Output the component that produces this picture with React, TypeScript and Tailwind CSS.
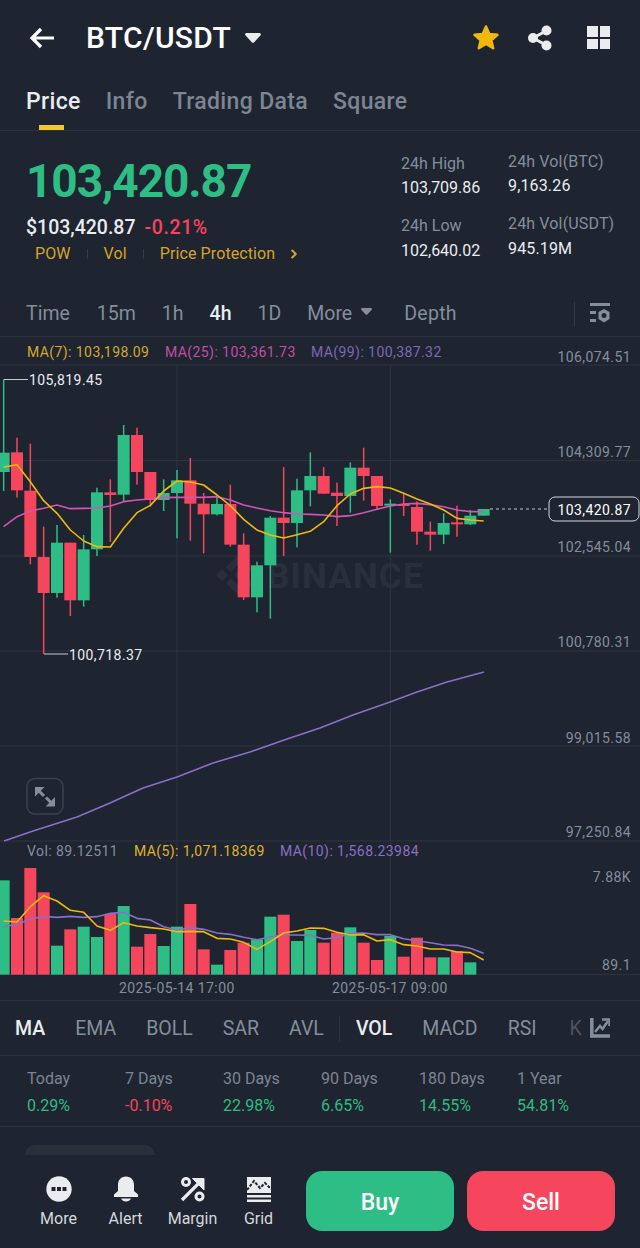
import React from "react";
import { ChevronRight } from "lucide-react";

const G = "#2ebd85";
const R = "#f6465d";
const cx = (v: number) => v / 3;
const cy = (v: number) => 340 + v / 3;

// [zoom x, wick top, wick bottom, body top, body bottom, green?]
const candles: [number, number, number, number, number, number][] = [
  [11, 118, 453, 338, 396, 1],
  [51, 293, 473, 337, 451, 0],
  [91, 311, 673, 452, 651, 0],
  [131, 560, 942, 651, 759, 0],
  [171, 555, 773, 608, 759, 1],
  [211, 608, 828, 608, 781, 0],
  [251, 585, 800, 628, 781, 1],
  [291, 443, 648, 457, 628, 1],
  [331, 418, 606, 457, 465, 0],
  [371, 255, 485, 285, 464, 1],
  [411, 263, 434, 285, 396, 0],
  [451, 396, 500, 396, 480, 0],
  [491, 418, 513, 459, 480, 1],
  [531, 390, 595, 421, 459, 1],
  [571, 354, 602, 421, 491, 0],
  [611, 459, 640, 491, 523, 0],
  [651, 470, 526, 492, 523, 1],
  [691, 434, 620, 492, 614, 0],
  [731, 580, 780, 614, 772, 0],
  [771, 665, 817, 676, 772, 1],
  [811, 528, 836, 533, 676, 1],
  [851, 381, 648, 533, 549, 0],
  [891, 416, 622, 451, 549, 1],
  [931, 337, 499, 408, 451, 1],
  [971, 381, 461, 408, 461, 0],
  [1011, 428, 558, 458, 468, 0],
  [1051, 367, 518, 383, 468, 1],
  [1091, 323, 482, 383, 408, 0],
  [1131, 408, 510, 408, 498, 0],
  [1171, 478, 638, 491, 497, 1],
  [1211, 462, 528, 492, 498, 0],
  [1251, 484, 614, 501, 575, 0],
  [1291, 545, 632, 575, 584, 0],
  [1331, 520, 612, 549, 584, 1],
  [1371, 497, 590, 547, 553, 0],
  [1411, 510, 555, 527, 553, 1],
  [1451, 507, 527, 507, 527, 1],
];

const ma7 = [381, 374, 425, 482, 520, 570, 603, 620, 621, 565, 518, 496, 453, 423, 426, 435, 465, 497, 538, 570, 585, 594, 584, 574, 545, 497, 462, 445, 440, 444, 460, 477, 492, 510, 535, 540, 543];
const ma25 = [560, 530, 513, 505, 495, 506, 505, 504, 498, 485, 480, 477, 473, 472, 472, 472, 470, 480, 495, 504, 512, 518, 522, 523, 525, 530, 527, 518, 508, 498, 492, 490, 494, 500, 510, 515, 515];
const ma99: [number, number][] = [[4, 841], [33, 831], [77, 817], [110, 803], [143, 788], [177, 777], [213, 763], [250, 752], [287, 739], [320, 728], [353, 715], [390, 702], [417, 692], [447, 682], [484, 672]];

const volTops = [121, 234, 84, 157, 317, 268, 260, 291, 222, 198, 320, 282, 318, 260, 192, 328, 374, 330, 308, 298, 230, 224, 303, 270, 308, 278, 262, 308, 360, 288, 350, 293, 352, 352, 333, 367];
const volMa5 = [243, 246, 200, 167, 183, 211, 217, 258, 271, 248, 258, 263, 267, 275, 274, 275, 295, 297, 307, 328, 305, 279, 273, 264, 265, 277, 285, 284, 303, 299, 314, 318, 327, 327, 336, 338, 360];
const volMa10 = [260, 253, 238, 229, 232, 229, 232, 230, 220, 217, 235, 240, 260, 270, 263, 268, 279, 283, 292, 299, 291, 285, 285, 286, 297, 293, 280, 279, 284, 284, 296, 302, 308, 315, 316, 325, 340];

const xi = (i: number) => 3.67 + i * 13.333;
const pts = (a: number[], base: number) => a.map((v, i) => `${xi(i)},${base + v / 3}`).join(" ");

const axis: [string, number][] = [
  ["106,074.51", 357],
  ["104,309.77", 452],
  ["102,545.04", 547],
  ["100,780.31", 642],
  ["99,015.58", 738],
  ["97,250.84", 832],
  ["7.88K", 877],
  ["89.1", 965],
];

function Chart() {
  const grid = [365, 460.5, 556, 651, 746, 841, 974.5];
  return (
    <svg width="640" height="663" viewBox="0 337 640 663" className="block">
      {grid.map((y) => (
        <line key={y} x1="0" x2="640" y1={y} y2={y} stroke="#2c333e" strokeWidth="1" />
      ))}
      <line x1="177" x2="177" y1="365" y2="975" stroke="#2c333e" />
      <line x1="390.5" x2="390.5" y1="365" y2="975" stroke="#2c333e" />

      <g fill="#2a303b">
        <path d="M240 553L254 567L249 572L240 563L231 572L226 567ZM240 597L254 583L249 578L240 587L231 578L226 583ZM240 569L246 575L240 581L234 575ZM222 569L228 575L222 581L216 575ZM258 569L264 575L258 581L252 575Z" />
        <text x="267" y="588" fontSize="35" fontWeight="700" letterSpacing="1.2">BINANCE</text>
      </g>

      {candles.map(([x, wt, wb, bt, bb, g], i) => {
        const c = g ? G : R;
        return (
          <g key={i}>
            <rect x={cx(x) - 0.75} y={cy(wt)} width="1.5" height={(wb - wt) / 3} fill={c} />
            <rect x={cx(x) - 6} y={cy(bt)} width="12" height={Math.max((bb - bt) / 3, 2)} fill={c} />
          </g>
        );
      })}

      <polyline points={pts(ma25, 340)} fill="none" stroke="#d255b4" strokeWidth="1.6" strokeLinejoin="round" />
      <polyline points={pts(ma7, 340)} fill="none" stroke="#f0b90b" strokeWidth="1.6" strokeLinejoin="round" />
      <polyline points={ma99.map((p) => p.join(",")).join(" ")} fill="none" stroke="#8a6fc9" strokeWidth="1.6" strokeLinejoin="round" />

      <g fontSize="14" dominantBaseline="central" letterSpacing="0.42">
        <text x="27" y="351.5" fill="#d6a92a">MA(7): 103,198.09</text>
        <text x="165" y="351.5" fill="#c34fa4">MA(25): 103,361.73</text>
        <text x="311" y="351.5" fill="#7f68b5">MA(99): 100,387.32</text>
        <text x="27" y="851" fill="#848e9c">Vol: 89.12511</text>
        <text x="134" y="851" fill="#e0b32a">MA(5): 1,071.18369</text>
        <text x="280" y="851" fill="#8a6fc9">MA(10): 1,568.23984</text>
        {axis.map(([t, y]) => (
          <text key={t} x="631" y={y} textAnchor="end" fill="#848e9c">{t}</text>
        ))}
        <text x="119" y="987.5" fill="#848e9c">2025-05-14 17:00</text>
        <text x="332" y="987.5" fill="#848e9c">2025-05-17 09:00</text>
        <text x="29" y="380" fill="#eaecef">105,819.45</text>
        <text x="69" y="655" fill="#eaecef">100,718.37</text>
      </g>
      <path d="M4 379.5H28" stroke="#c5cad1" strokeWidth="1" />
      <path d="M44 654H68" stroke="#c5cad1" strokeWidth="1" />

      <line x1="490" x2="548" y1="509" y2="509" stroke="#c5cad1" strokeDasharray="3 3" />
      <rect x="549" y="497" width="90" height="24" rx="6" fill="#1e2430" stroke="#d5d8dc" />
      <text x="631" y="509.5" textAnchor="end" fontSize="14" letterSpacing="0.42" fill="#ffffff" dominantBaseline="central">103,420.87</text>

      <rect x="27" y="778.5" width="36" height="35.5" rx="8" fill="none" stroke="#3a414c" strokeWidth="1.5" />
      <path d="M35 787h9.500l-9.500 9.500zM55 806.500h-9.500l9.500-9.500z" fill="#848e9c" />
      <path d="M38 790l6 6M52 803.500l-6-6" stroke="#848e9c" strokeWidth="3" />

      {volTops.map((t, i) => (
        <rect key={i} x={xi(i) - 6} y={840 + t / 3} width="12" height={(404 - t) / 3} fill={candles[i][5] ? G : R} />
      ))}
      <polyline points={pts(volMa10, 840)} fill="none" stroke="#8a6fc9" strokeWidth="1.6" strokeLinejoin="round" />
      <polyline points={pts(volMa5, 840)} fill="none" stroke="#f0b90b" strokeWidth="1.6" strokeLinejoin="round" />
    </svg>
  );
}

const Caret = ({ className }: { className: string }) => (
  <svg viewBox="0 0 16 10" className={className} fill="currentColor">
    <path d="M1.6 0h12.800c1.200 0 1.900 1.300 1.200 2.300L9.200 9.200c-.6.800-1.800.800-2.400 0L.4 2.300C-.3 1.300.4 0 1.600 0z" />
  </svg>
);

const SlidersIcon = () => (
  <svg width="21" height="24" viewBox="0 0 21 24" fill="#848e9c">
    <rect x="1" y="1" width="20" height="3" />
    <rect x="1" y="9" width="6" height="3" />
    <rect x="1" y="17" width="6" height="3" />
    <path fillRule="evenodd" d="M15 7l5.500 3v7L15 20.500 9.500 17v-7zM15 11a2.500 2.500 0 100 5 2.500 2.500 0 000-5z" />
  </svg>
);

const stats = [
  ["Today", "0.29%", G],
  ["7 Days", "-0.10%", R],
  ["30 Days", "22.98%", G],
  ["90 Days", "6.65%", G],
  ["180 Days", "14.55%", G],
  ["1 Year", "54.81%", G],
];

export default function App() {
  return (
    <div className="w-[640px] h-[1248px] overflow-hidden bg-[#1e2430] font-[Roboto,sans-serif] text-[#eaecef]">
      {/* header */}
      <div className="h-[75px] flex items-center pl-[29px] pr-[30px]">
        <svg width="26" height="22" viewBox="0 0 26 22" fill="none" stroke="#fff" strokeWidth="3.2">
          <path d="M25 11H3M12 2l-9 9 9 9" />
        </svg>
        <span className="ml-[31px] text-[30px] tracking-[0.3px] leading-none font-medium text-white">BTC/USDT</span>
        <Caret className="ml-[14px] w-[16px] h-[10px] text-[#eaecef]" />
        <svg width="28" height="27" viewBox="0 0 28 27" className="ml-auto" fill="#f0b90b" stroke="#f0b90b" strokeWidth="2.500" strokeLinejoin="round">
          <path d="M14 2.500l3.300 7.600 8.200.7-6.200 5.400 1.900 8-7.200-4.300-7.200 4.300 1.900-8-6.200-5.400 8.200-.7z" />
        </svg>
        <svg width="26" height="26" viewBox="0 0 26 26" className="ml-[27px]" fill="#eaecef">
          <path d="M19 6L6 13l13 7" fill="none" stroke="#eaecef" strokeWidth="3" />
          <circle cx="19.500" cy="5.500" r="5" />
          <circle cx="6" cy="13" r="5" />
          <circle cx="19.500" cy="20.500" r="5" />
        </svg>
        <div className="ml-[34px] w-[23px] h-[23px] grid grid-cols-2 gap-[2px]">
          <div className="bg-[#eaecef]" />
          <div className="bg-[#eaecef]" />
          <div className="bg-[#eaecef]" />
          <div className="bg-[#eaecef]" />
        </div>
      </div>

      {/* tabs */}
      <div className="h-[56px] border-b border-[#2c333e] flex gap-[25px] pl-[26px] text-[23px] tracking-[0.35px] leading-[54px] font-medium text-[#7c8593]">
        <div className="relative text-[#eaecef]">
          Price
          <div className="absolute left-[13px] top-[50px] w-[25px] h-[5px] bg-[#f0c92e]" />
        </div>
        <div>Info</div>
        <div>Trading Data</div>
        <div>Square</div>
      </div>

      {/* price */}
      <div className="h-[160px] flex">
        <div className="pl-[26px] w-[401px]">
          <div className="mt-[27px] text-[46px] tracking-[-1.05px] leading-[46px] font-bold text-[#2ebd85]">103,420.87</div>
          <div className="mt-[12px] flex items-center gap-[9px] text-[19.5px] leading-[24px] font-medium">
            <span className="text-[#eaecef]">$103,420.87</span>
            <span className="text-[#f6465d] tracking-[0.6px]">-0.21%</span>
          </div>
          <div className="mt-[3px] ml-[9px] flex items-center text-[#d5a428] text-[16px] tracking-[0.1px] leading-[22px]">
            <span>POW</span>
            <span className="mx-[16px] w-px h-[10px] bg-[#343b47]" />
            <span>Vol</span>
            <span className="mx-[16px] w-px h-[10px] bg-[#343b47]" />
            <span>Price Protection</span>
            <ChevronRight className="ml-[12px] w-[14px] h-[14px]" strokeWidth={3.500} />
          </div>
        </div>
        <div className="w-[107px] pt-[22px] text-[16px] leading-[22px]">
          <div className="text-[#848e9c]">24h High</div>
          <div className="mt-[2px]">103,709.86</div>
          <div className="mt-[16px] text-[#848e9c]">24h Low</div>
          <div className="mt-[3px]">102,640.02</div>
        </div>
        <div className="pt-[20px] text-[16px] tracking-[0.15px] leading-[22px]">
          <div className="text-[#848e9c]">24h Vol(BTC)</div>
          <div className="mt-[2px]">9,163.26</div>
          <div className="mt-[16px] text-[#848e9c]">24h Vol(USDT)</div>
          <div className="mt-[3px]">945.19M</div>
        </div>
      </div>

      {/* intervals */}
      <div className="h-[46px] border-b border-[#2c333e] flex items-center pl-[26px] pr-[30px] text-[19.5px] text-[#848e9c]">
        <span>Time</span>
        <span className="ml-[27px]">15m</span>
        <span className="ml-[26px]">1h</span>
        <span className="ml-[26px] font-medium text-[#eaecef]">4h</span>
        <span className="ml-[26px]">1D</span>
        <span className="ml-[26px]">More</span>
        <Caret className="ml-[9px] w-[11px] h-[7px] mb-[4px] text-[#848e9c]" />
        <span className="ml-[32px] tracking-[0.3px]">Depth</span>
        <span className="ml-auto w-px h-[24px] bg-[#343b47]" />
        <span className="ml-[14px] flex"><SlidersIcon /></span>
      </div>

      <Chart />

      {/* indicators */}
      <div className="h-[56px] border-t border-b border-[#2c333e] relative flex items-center pl-[15px] pt-[2px] text-[19.5px] text-[#848e9c]">
        <span className="font-medium text-[#eaecef]">MA</span>
        <span className="ml-[30px]">EMA</span>
        <span className="ml-[30px]">BOLL</span>
        <span className="ml-[30px]">SAR</span>
        <span className="ml-[30px]">AVL</span>
        <span className="ml-[15px] w-px h-[26px] bg-[#2c333e]" />
        <span className="ml-[16px] font-medium text-[#eaecef]">VOL</span>
        <span className="ml-[30px]">MACD</span>
        <span className="ml-[30px]">RSI</span>
        <span className="ml-[33px] text-[#4e5561]">K</span>
        <svg width="20" height="22" viewBox="0 0 20 22" className="absolute left-[590px] top-[16px]" fill="none" stroke="#848e9c" strokeWidth="3.500">
          <path d="M1.800 1v18H20" />
          <path d="M5 15l5-6 2.500 3L18 4" strokeWidth="2.500" />
          <path d="M12 2.500h7.500V9" strokeWidth="2.500" />
        </svg>
      </div>

      {/* returns */}
      <div className="h-[71px] border-b border-[#2c333e] grid grid-cols-[98px_98px_98px_98px_98px_98px] pl-[27px] pt-[11px] text-[16px] leading-[24px]">
        {stats.map(([a, b, c]) => (
          <div key={a}>
            <div className="text-[#7c8593]">{a}</div>
            <div className="mt-[3px]" style={{ color: c }}>{b}</div>
          </div>
        ))}
      </div>

      <div className="h-[28px] pl-[25px] pt-[18px]">
        <div className="w-[130px] h-[10px] rounded-t-[12px] bg-[#2a303a]" />
      </div>

      {/* bottom bar */}
      <div className="h-[93px] flex pt-[16px] pl-[25px]">
        <div className="w-[281px] flex">
          <NavItem label="More" w="w-[67px]">
            <svg width="26" height="26" viewBox="0 0 26 26">
              <circle cx="13" cy="13" r="12.700" fill="#eaecef" />
              <rect x="5.500" y="11" width="4" height="4" fill="#1e2430" />
              <rect x="11" y="11" width="4" height="4" fill="#1e2430" />
              <rect x="16.500" y="11" width="4" height="4" fill="#1e2430" />
            </svg>
          </NavItem>
          <NavItem label="Alert" w="w-[67px]">
            <svg width="26" height="26" viewBox="0 0 26 26" fill="#eaecef">
              <path d="M13 0.500c-5 0-8 3.500-8 8.500v6l-4 3.500V21h24v-2.500l-4-3.500V9c0-5-3-8.500-8-8.500z" />
              <path d="M8 22.500h10c-.8 2-2.800 3-5 3s-4.200-1-5-3z" />
            </svg>
          </NavItem>
          <NavItem label="Margin" w="w-[67px]">
            <svg width="26" height="26" viewBox="0 0 26 26" fill="none" stroke="#eaecef">
              <path d="M2 24L22 4" strokeWidth="3.200" />
              <path d="M24 2.500V14L12.500 2.500z" fill="#eaecef" strokeWidth="1" />
              <circle cx="6" cy="6" r="3.500" strokeWidth="3" />
              <circle cx="19.500" cy="20.500" r="3.500" strokeWidth="3" />
            </svg>
          </NavItem>
          <NavItem label="Grid" w="w-[65px]">
            <svg width="24" height="26" viewBox="0 0 24 26">
              <path d="M0 1h24v16H0z" fill="#eaecef" />
              <path d="M0 14l7-9 6 7 5-5 6 6" fill="none" stroke="#1e2430" strokeWidth="2" strokeDasharray="3 1.500" />
              <rect x="0" y="19" width="24" height="2.500" fill="#eaecef" />
              <rect x="0" y="23.500" width="24" height="2.500" fill="#eaecef" />
            </svg>
          </NavItem>
        </div>
        <button className="w-[148px] h-[60px] pt-[4px] rounded-[16px] bg-[#2ebd85] text-white text-[23px] font-medium">Buy</button>
        <button className="ml-[13px] w-[148px] h-[60px] pt-[4px] rounded-[16px] bg-[#f6465d] text-white text-[23px] font-medium">Sell</button>
      </div>
    </div>
  );
}

function NavItem({ label, w, children }: { label: string; w: string; children: React.ReactNode }) {
  return (
    <div className={`${w} flex flex-col items-center text-[16px] leading-[20px] text-[#d5d8dc]`}>
      <div className="h-[26px] mt-[5px] flex">{children}</div>
      <div className="mt-[7px]">{label}</div>
    </div>
  );
}
